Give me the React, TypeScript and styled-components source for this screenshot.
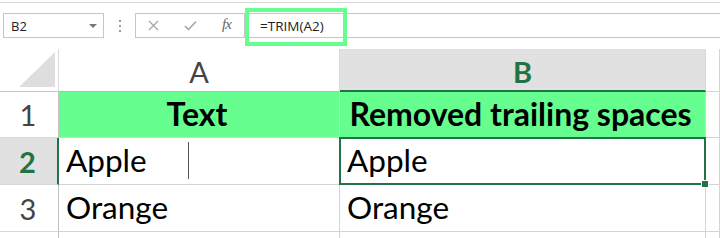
import styled, { createGlobalStyle } from 'styled-components';

const GlobalStyle = createGlobalStyle`
  html, body {
    margin: 0;
    padding: 0;
    background: #fff;
    overflow: hidden;
  }
`;

const EXCEL_GREEN = '#217346';
const MARK_GREEN = '#66ff8f';

const Page = styled.div`
  width: 720px;
  height: 238px;
  padding-top: 2px;
  box-sizing: border-box;
  overflow: hidden;
`;

const FormulaBar = styled.div`
  display: flex;
  align-items: flex-start;
  height: 44px;
  padding: 10px 0 0 3px;
  box-sizing: border-box;
  border-top: 1px solid #d8d8d8;
  font-family: 'Open Sans', 'Noto Sans', sans-serif;
  font-size: 13px;
  color: #222;
`;

const NameBox = styled.div`
  width: 101px;
  height: 25px;
  box-sizing: border-box;
  border: 1px solid #c6c6c6;
  display: flex;
  align-items: center;
  justify-content: space-between;
  padding: 0 6px 0 7px;
`;

const DropArrow = styled.span`
  width: 0;
  height: 0;
  border-left: 4px solid transparent;
  border-right: 4px solid transparent;
  border-top: 4px solid #777;
`;

const Dots = styled.div`
  width: 31px;
  height: 25px;
  display: flex;
  flex-direction: column;
  align-items: center;
  justify-content: center;
  gap: 3px;

  span {
    width: 2px;
    height: 2px;
    background: #9a9a9a;
  }
`;

const IconBox = styled.div`
  width: 110px;
  height: 25px;
  box-sizing: border-box;
  border: 1px solid #c6c6c6;
  display: flex;
  align-items: center;
  padding-left: 12px;
  gap: 25px;
`;

const Fx = styled.span`
  font-family: 'Liberation Serif', serif;
  font-style: italic;
  font-size: 15px;
  color: #666;
  letter-spacing: -1px;
  padding-bottom: 2px;
`;

const FormulaInput = styled.div`
  flex: 1;
  height: 25px;
  box-sizing: border-box;
  border-top: 1px solid #c6c6c6;
  border-bottom: 1px solid #c6c6c6;
  display: flex;
  align-items: flex-start;
`;

const Highlight = styled.div`
  width: 102px;
  height: 38px;
  margin-top: -6px;
  box-sizing: border-box;
  border: 4px solid ${MARK_GREEN};
  display: flex;
  align-items: center;
  padding: 0 0 2px 11px;
  font-size: 13.5px;
`;

const Sheet = styled.div`
  display: grid;
  grid-template-columns: 59px 281px 366px 1fr;
  grid-template-rows: 43px 46px 47px 47px 47px;
  margin-top: 3px;
  font-family: 'Lato', 'Open Sans', sans-serif;
`;

const Corner = styled.div`
  border-right: 1px solid #d8d8d8;
  border-bottom: 1px solid #c8c8c8;
  display: flex;
  align-items: flex-end;
  justify-content: flex-end;
  padding: 0 3px 4px 0;
`;

const Triangle = styled.div`
  width: 0;
  height: 0;
  border-left: 36px solid transparent;
  border-bottom: 35px solid #dedede;
`;

const ColHead = styled.div<{ $active?: boolean }>`
  display: flex;
  align-items: center;
  justify-content: center;
  box-sizing: border-box;
  font-size: 29px;
  background: ${p => (p.$active ? '#e1e1e1' : '#fff')};
  color: ${p => (p.$active ? EXCEL_GREEN : '#444')};
  font-weight: ${p => (p.$active ? 700 : 400)};
  border-right: 1px solid #d8d8d8;
  border-bottom: ${p => (p.$active ? `2px solid ${EXCEL_GREEN}` : '1px solid #b8b8b8')};
  padding-top: 3px;
`;

const RowHead = styled.div<{ $active?: boolean }>`
  display: flex;
  align-items: center;
  justify-content: center;
  box-sizing: border-box;
  font-size: 29px;
  background: ${p => (p.$active ? '#e1e1e1' : '#fff')};
  color: ${p => (p.$active ? EXCEL_GREEN : '#444')};
  font-weight: ${p => (p.$active ? 700 : 400)};
  border-right: ${p => (p.$active ? `2px solid ${EXCEL_GREEN}` : '1px solid #c0c0c0')};
  border-bottom: 1px solid #d8d8d8;
  padding-right: 2px;
`;

const Cell = styled.div<{ $head?: boolean; $blank?: boolean }>`
  display: flex;
  align-items: center;
  justify-content: ${p => (p.$head ? 'center' : 'flex-start')};
  box-sizing: border-box;
  padding: ${p => (p.$head ? '0 4px 2px 0' : '0 0 2px 7px')};
  font-size: ${p => (p.$head ? '32px' : '31.5px')};
  font-weight: ${p => (p.$head ? 700 : 400)};
  color: #000;
  white-space: nowrap;
  background: ${p => (p.$head && !p.$blank ? MARK_GREEN : '#fff')};
  border-right: 1px solid #d4d4d4;
  border-bottom: 1px solid #d4d4d4;
`;

const SelectedCell = styled(Cell)`
  position: relative;
  border: 2px solid ${EXCEL_GREEN};
  margin: -1px 0 0 -1px;
  padding-left: 6px;
`;

const FillHandle = styled.span`
  position: absolute;
  right: -5px;
  bottom: -5px;
  width: 6px;
  height: 6px;
  background: ${EXCEL_GREEN};
  border: 1px solid #fff;
`;

const Caret = styled.span`
  width: 1.5px;
  height: 37px;
  margin-left: 41px;
  background: #555;
`;

const CancelIcon = () => (
  <svg width="11" height="11" viewBox="0 0 11 11">
    <path d="M1 1L10 10M10 1L1 10" stroke="#a8a8a8" strokeWidth="1.3" fill="none" />
  </svg>
);

const CheckIcon = () => (
  <svg width="13" height="11" viewBox="0 0 13 11">
    <path d="M1 6L4.5 9.5L12 1.5" stroke="#a8a8a8" strokeWidth="1.6" fill="none" />
  </svg>
);

const App = () => {
  return (
    <Page>
      <GlobalStyle />
      <FormulaBar>
        <NameBox>
          <span>B2</span>
          <DropArrow />
        </NameBox>
        <Dots>
          <span />
          <span />
          <span />
        </Dots>
        <IconBox>
          <CancelIcon />
          <CheckIcon />
          <Fx>fx</Fx>
        </IconBox>
        <FormulaInput>
          <Highlight>=TRIM(A2)</Highlight>
        </FormulaInput>
      </FormulaBar>

      <Sheet>
        <Corner>
          <Triangle />
        </Corner>
        <ColHead>A</ColHead>
        <ColHead $active>B</ColHead>
        <Cell $blank />

        <RowHead>1</RowHead>
        <Cell $head>Text</Cell>
        <Cell $head>Removed trailing spaces</Cell>
        <Cell $head $blank />

        <RowHead $active>2</RowHead>
        <Cell>
          Apple
          <Caret />
        </Cell>
        <SelectedCell>
          Apple
          <FillHandle />
        </SelectedCell>
        <Cell />

        <RowHead>3</RowHead>
        <Cell>Orange</Cell>
        <Cell>Orange</Cell>
        <Cell />

        <RowHead />
        <Cell />
        <Cell />
        <Cell />
      </Sheet>
    </Page>
  );
};

export default App;
